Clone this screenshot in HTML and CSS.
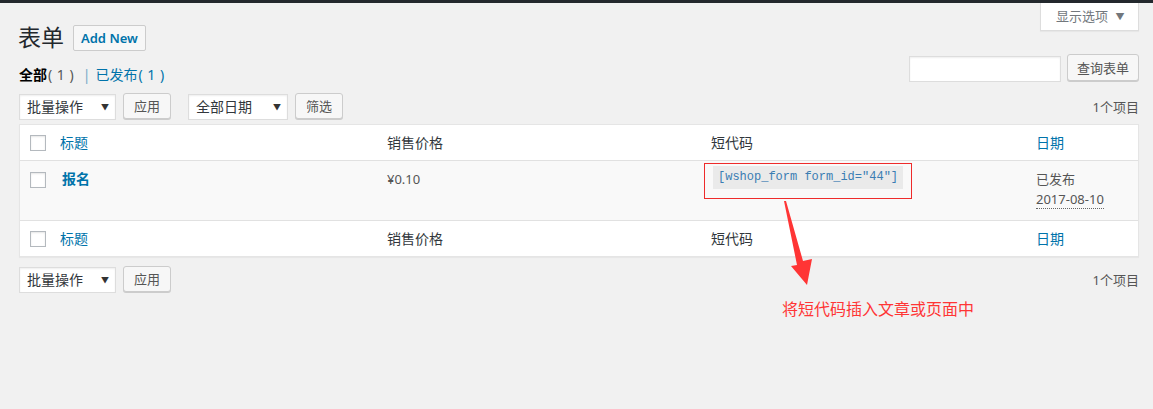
FILE: index.html
```html
<!DOCTYPE html>
<html>
<head>
    <meta charset="utf-8">
    <title>表单</title>
    <link rel="stylesheet" href="styles.css">
</head>
<body>
    <div class="adminbar"></div>

    <div class="wrap">
        <div class="head">
            <div class="title-row">
                <h1>表单</h1>
                <a class="page-title-action" href="#">Add New</a>
            </div>
            <div class="screen-tab">显示选项 <span class="tri">▼</span></div>
        </div>

        <div class="subrow">
            <ul class="subsubsub">
                <li class="current">全部<span class="count">( 1 )</span></li>
                <li class="sep">|</li>
                <li><a href="#">已发布<span class="count">( 1 )</span></a></li>
            </ul>
            <form class="search-box">
                <input type="search" class="search-input">
                <button type="button" class="button">查询表单</button>
            </form>
        </div>

        <div class="tablenav">
            <div class="actions">
                <span class="select wide-97">批量操作</span>
                <button type="button" class="button">应用</button>
                <span class="select wide-100 gap">全部日期</span>
                <button type="button" class="button">筛选</button>
            </div>
            <div class="displaying-num">1个项目</div>
        </div>

        <div class="list-table">
            <div class="row head-row">
                <div class="cell cb"><input type="checkbox"></div>
                <div class="cell"><a href="#">标题</a></div>
                <div class="cell">销售价格</div>
                <div class="cell">短代码</div>
                <div class="cell"><a href="#">日期</a></div>
            </div>
            <div class="row body-row">
                <div class="cell cb"><input type="checkbox"></div>
                <div class="cell"><a class="row-title" href="#">报名</a></div>
                <div class="cell small">¥0.10</div>
                <div class="cell shortcode">
                    <span class="mark"><code>[wshop_form form_id="44"]</code></span>
                </div>
                <div class="cell small">已发布<br><abbr>2017-08-10</abbr></div>
            </div>
            <div class="row foot-row">
                <div class="cell cb"><input type="checkbox"></div>
                <div class="cell"><a href="#">标题</a></div>
                <div class="cell">销售价格</div>
                <div class="cell">短代码</div>
                <div class="cell"><a href="#">日期</a></div>
            </div>
        </div>

        <div class="tablenav bottom">
            <div class="actions">
                <span class="select wide-97">批量操作</span>
                <button type="button" class="button">应用</button>
            </div>
            <div class="displaying-num">1个项目</div>
        </div>
    </div>

    <!-- annotation drawn over the page -->
    <svg class="note-arrow" width="40" height="92" viewBox="0 0 40 92">
        <polygon points="4,3 6,3 23,63 32,61 27,87 11,68 17,67" fill="#ff3535"/>
    </svg>
    <div class="note">将短代码插入文章或页面中</div>
</body>
</html>
```

FILE: styles.css
```css
body {
    margin: 0;
    padding: 0;
    background-color: #f1f1f1;
    color: #444;
    font-family: "Noto Sans", "Noto Sans CJK SC", sans-serif;
    font-size: 13px;
    position: relative;
    min-height: 409px;
}

a {
    color: #0073aa;
    text-decoration: none;
}

.adminbar {
    height: 3px;
    background-color: #23282d;
}

.wrap {
    padding: 0 14px 0 19px;
}

.head {
    display: flex;
    justify-content: space-between;
    align-items: flex-start;
}

.title-row {
    display: flex;
    align-items: center;
    height: 27px;
    margin-top: 21px;
}

h1 {
    margin: 0 9px 0 -1px;
    font-size: 23px;
    font-weight: 400;
    line-height: 27px;
    color: #23282d;
}

.page-title-action {
    display: inline-block;
    height: 24px;
    line-height: 24px;
    padding: 0 7px;
    border: 1px solid #ccc;
    border-radius: 2px;
    background-color: #f7f7f7;
    font-size: 13px;
    font-weight: 600;
}

.screen-tab {
    box-sizing: border-box;
    width: 99px;
    height: 28px;
    line-height: 26px;
    padding-left: 15px;
    background-color: #fff;
    border: 1px solid #ddd;
    border-top: none;
    box-shadow: 0 1px 1px rgba(0, 0, 0, 0.04);
    color: #72777c;
    font-size: 13px;
}

.tri {
    font-size: 9px;
    margin-left: 4px;
    vertical-align: 1px;
}

.subrow {
    display: flex;
    justify-content: space-between;
    align-items: flex-end;
    margin-top: 3px;
}

.subsubsub {
    display: flex;
    list-style: none;
    margin: 0;
    padding: 0;
    font-size: 14px;
    line-height: 14px;
    color: #666;
}

.subsubsub .current {
    color: #000;
    font-weight: 600;
}

.subsubsub .count {
    margin-left: 1px;
    color: #555;
    font-weight: 400;
    word-spacing: 1px;
}

.subsubsub a .count {
    color: #0073aa;
}

.subsubsub .sep {
    color: #7aa9c8;
    padding: 0 5px 0 9px;
}

.search-box {
    display: flex;
    align-items: flex-end;
    gap: 6px;
    margin: 0;
}

.search-input {
    box-sizing: border-box;
    width: 152px;
    height: 26px;
    margin: 0;
    border: 1px solid #ddd;
    background-color: #fff;
    box-shadow: inset 0 1px 2px rgba(0, 0, 0, 0.07);
}

.button {
    box-sizing: border-box;
    height: 26px;
    margin: 0 0 1px 0;
    padding: 0 10px;
    border: 1px solid #ccc;
    border-radius: 3px;
    background-color: #f7f7f7;
    box-shadow: 0 1px 0 #ccc;
    color: #555;
    font-family: "Noto Sans", "Noto Sans CJK SC", sans-serif;
    font-size: 13px;
    line-height: 24px;
    cursor: pointer;
}

.search-box .button {
    height: 27px;
    padding: 0 9px;
}

.tablenav {
    display: flex;
    justify-content: space-between;
    align-items: center;
    margin-top: 11px;
}

.tablenav.bottom {
    margin-top: 9px;
}

.actions {
    display: flex;
    align-items: center;
    gap: 7px;
}

.select {
    box-sizing: border-box;
    position: relative;
    height: 26px;
    line-height: 24px;
    padding-left: 7px;
    border: 1px solid #ddd;
    background-color: #fff;
    box-shadow: inset 0 1px 2px rgba(0, 0, 0, 0.07);
    color: #32373c;
    font-size: 14px;
}

.select::after {
    content: "▼";
    position: absolute;
    right: 6px;
    top: 0;
    font-size: 8px;
    color: #333;
}

.wide-97 {
    width: 97px;
}

.wide-100 {
    width: 100px;
}

.gap {
    margin-left: 10px;
}

.displaying-num {
    color: #555;
    font-size: 13px;
}

.list-table {
    margin-top: 4px;
    background-color: #fff;
    border: 1px solid #e5e5e5;
    box-shadow: 0 1px 1px rgba(0, 0, 0, 0.04);
}

.row {
    display: grid;
    grid-template-columns: 30px 327px 324px 325px 1fr;
}

.head-row,
.foot-row {
    height: 35px;
    align-items: center;
    font-size: 14px;
    color: #32373c;
}

.head-row {
    border-bottom: 1px solid #e1e1e1;
}

.foot-row {
    border-top: 1px solid #e1e1e1;
}

.body-row {
    height: 59px;
    background-color: #f9f9f9;
}

.cell {
    padding-left: 10px;
    line-height: 20px;
}

.body-row .cell {
    padding-top: 8px;
}

.cb {
    display: flex;
}

.cb input {
    appearance: none;
    box-sizing: border-box;
    width: 16px;
    height: 16px;
    margin: 1px 0 0 0;
    border: 1px solid #b4b9be;
    background-color: #fff;
    box-shadow: inset 0 1px 2px rgba(0, 0, 0, 0.1);
}

.body-row .cb input {
    margin-top: 3px;
}

.row-title {
    margin-left: 2px;
    font-size: 14px;
    font-weight: 600;
}

.small {
    color: #555;
    font-size: 13px;
}

.body-row .shortcode {
    padding-top: 2px;
    padding-left: 3px;
}

.mark {
    display: inline-block;
    padding: 2px 8px 9px 8px;
    border: 1px solid #ee2b2b;
}

code {
    display: block;
    width: 190px;
    box-sizing: border-box;
    padding: 0 5px;
    background-color: #eaeaea;
    color: #3a7db3;
    font-family: "Liberation Mono", monospace;
    font-size: 12px;
    line-height: 23px;
    white-space: nowrap;
}

abbr {
    text-decoration: none;
    border-bottom: 1px dotted #666;
    line-height: 16px;
}

.note-arrow {
    position: absolute;
    left: 780px;
    top: 198px;
}

.note {
    position: absolute;
    left: 782px;
    top: 297px;
    color: #ff3535;
    font-family: "Noto Sans CJK SC", sans-serif;
    font-size: 16px;
    line-height: 22px;
}
```
